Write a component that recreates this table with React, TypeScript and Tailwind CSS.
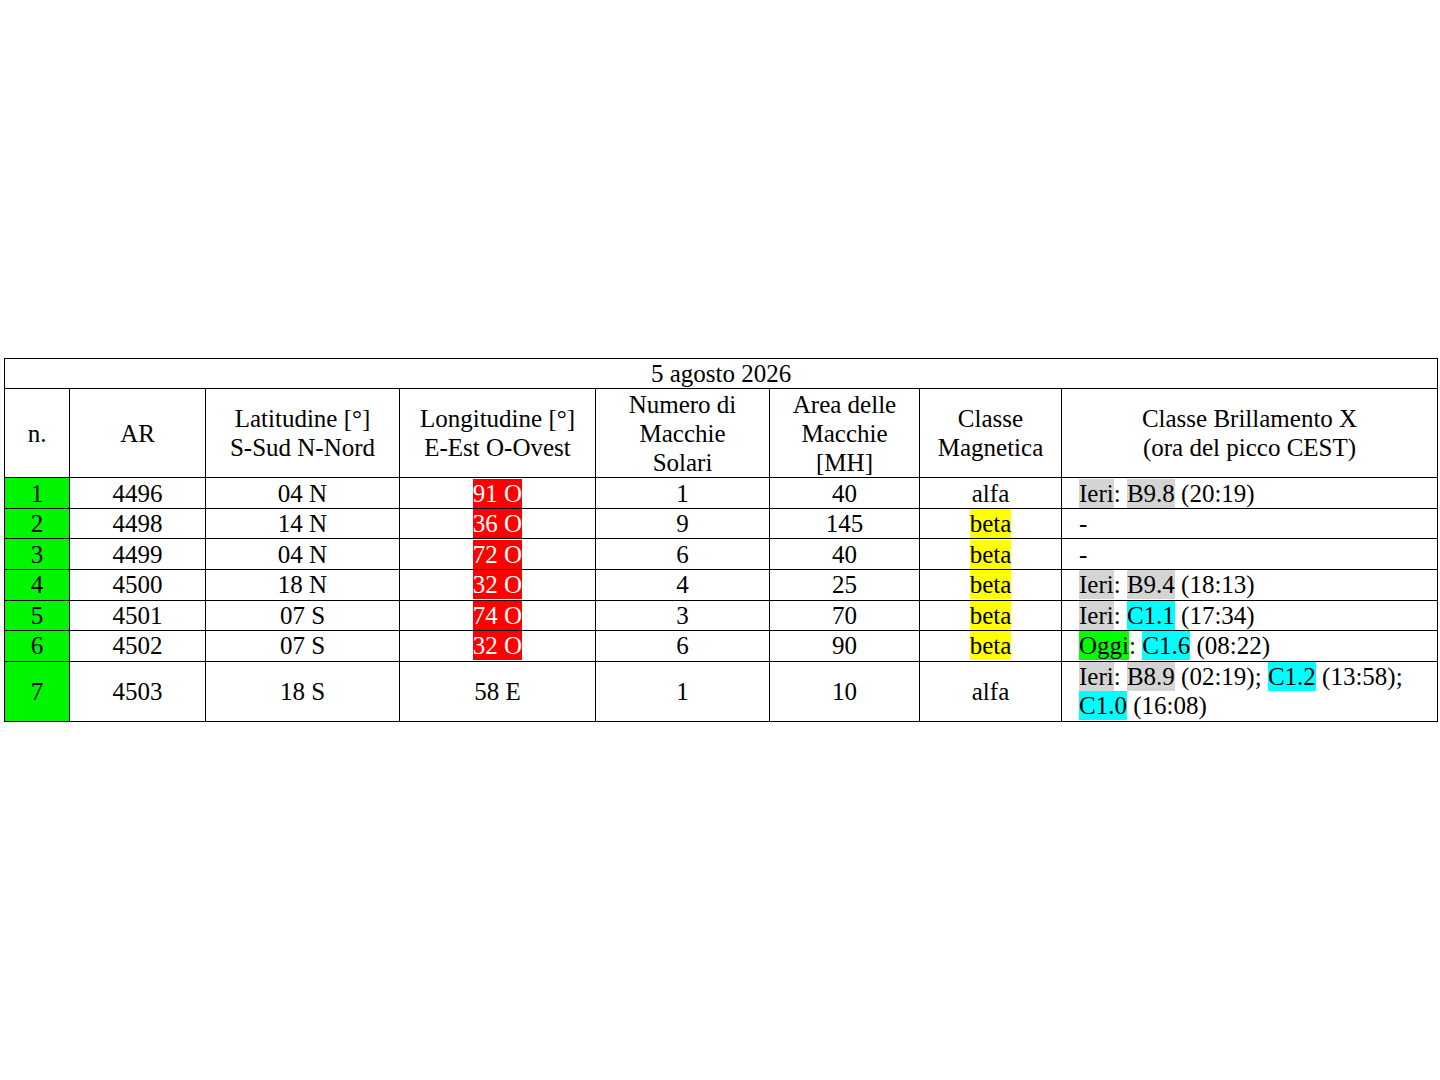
import React from "react"

type Hl = "gray" | "cyan" | "green"

const hlClass: Record<Hl, string> = {
  gray: "bg-[#d4d4d4] py-[1px]",
  cyan: "bg-[#00ffff] py-[1px]",
  green: "bg-[#00ff00] py-[1px]",
}

type Part = { t: string; hl?: Hl }

type Row = {
  n: string
  ar: string
  lat: string
  lon: string
  lonRed: boolean
  num: string
  area: string
  mag: string
  flare: Part[]
  tall?: boolean
}

const rows: Row[] = [
  {
    n: "1", ar: "4496", lat: "04 N", lon: "91 O", lonRed: true, num: "1", area: "40", mag: "alfa",
    flare: [{ t: "Ieri", hl: "gray" }, { t: ": " }, { t: "B9.8", hl: "gray" }, { t: " (20:19)" }],
  },
  { n: "2", ar: "4498", lat: "14 N", lon: "36 O", lonRed: true, num: "9", area: "145", mag: "beta", flare: [{ t: "-" }] },
  { n: "3", ar: "4499", lat: "04 N", lon: "72 O", lonRed: true, num: "6", area: "40", mag: "beta", flare: [{ t: "-" }] },
  {
    n: "4", ar: "4500", lat: "18 N", lon: "32 O", lonRed: true, num: "4", area: "25", mag: "beta",
    flare: [{ t: "Ieri", hl: "gray" }, { t: ": " }, { t: "B9.4", hl: "gray" }, { t: " (18:13)" }],
  },
  {
    n: "5", ar: "4501", lat: "07 S", lon: "74 O", lonRed: true, num: "3", area: "70", mag: "beta",
    flare: [{ t: "Ieri", hl: "gray" }, { t: ": " }, { t: "C1.1", hl: "cyan" }, { t: " (17:34)" }],
  },
  {
    n: "6", ar: "4502", lat: "07 S", lon: "32 O", lonRed: true, num: "6", area: "90", mag: "beta",
    flare: [{ t: "Oggi", hl: "green" }, { t: ": " }, { t: "C1.6", hl: "cyan" }, { t: " (08:22)" }],
  },
  {
    n: "7", ar: "4503", lat: "18 S", lon: "58 E", lonRed: false, num: "1", area: "10", mag: "alfa", tall: true,
    flare: [
      { t: "Ieri", hl: "gray" }, { t: ": " }, { t: "B8.9", hl: "gray" }, { t: " (02:19); " },
      { t: "C1.2", hl: "cyan" }, { t: " (13:58); " }, { t: "C1.0", hl: "cyan" }, { t: " (16:08)" },
    ],
  },
]

const cell = "border border-black text-center align-middle p-0"

export default function App() {
  return (
    <div className="h-[1080px] w-[1440px] bg-white flex flex-col justify-center pl-[4px] font-['Liberation_Serif','Times_New_Roman',serif] text-[25px] leading-[29px] text-black">
      <table className="table-fixed border-collapse w-[1433px]">
        <colgroup>
          <col className="w-[65px]" />
          <col className="w-[136px]" />
          <col className="w-[194px]" />
          <col className="w-[196px]" />
          <col className="w-[174px]" />
          <col className="w-[150px]" />
          <col className="w-[142px]" />
          <col className="w-[376px]" />
        </colgroup>
        <thead>
          <tr className="h-[30px]">
            <th colSpan={8} className={`${cell} font-normal`}>5 agosto 2026</th>
          </tr>
          <tr className="h-[89px]">
            <th className={`${cell} font-normal`}>n.</th>
            <th className={`${cell} font-normal`}>AR</th>
            <th className={`${cell} font-normal`}>Latitudine [°]<br />S-Sud N-Nord</th>
            <th className={`${cell} font-normal`}>Longitudine [°]<br />E-Est O-Ovest</th>
            <th className={`${cell} font-normal`}>Numero di<br />Macchie<br />Solari</th>
            <th className={`${cell} font-normal`}>Area delle<br />Macchie<br />[MH]</th>
            <th className={`${cell} font-normal`}>Classe<br />Magnetica</th>
            <th className={`${cell} font-normal`}>Classe Brillamento X<br />(ora del picco CEST)</th>
          </tr>
        </thead>
        <tbody>
          {rows.map((r) => (
            <tr key={r.n} className={r.tall ? "h-[60px]" : "h-[30.6px]"}>
              <td className={`${cell} bg-[#00f500]`}>{r.n}</td>
              <td className={cell}>{r.ar}</td>
              <td className={cell}>{r.lat}</td>
              <td className={cell}>
                {r.lonRed ? <span className="bg-[#ff0000] text-white py-[1px]">{r.lon}</span> : r.lon}
              </td>
              <td className={cell}>{r.num}</td>
              <td className={cell}>{r.area}</td>
              <td className={cell}>
                {r.mag === "beta" ? <span className="bg-[#ffff00] py-[1px]">{r.mag}</span> : r.mag}
              </td>
              <td className="border border-black text-left align-middle py-0 pl-[17px] pr-[6px]">
                {r.flare.map((p, i) =>
                  p.hl ? (
                    <span key={i} className={hlClass[p.hl]}>{p.t}</span>
                  ) : (
                    <span key={i}>{p.t}</span>
                  )
                )}
              </td>
            </tr>
          ))}
        </tbody>
      </table>
    </div>
  )
}
